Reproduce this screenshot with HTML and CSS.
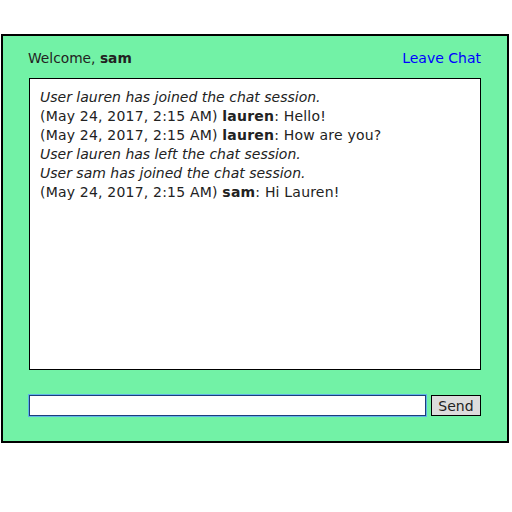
FILE: index.html
```html
<!DOCTYPE html>
<html>
<head>
<meta charset="utf-8">
<link rel="stylesheet" href="styles.css">
</head>
<body>
<div class="chat">
  <div class="header">
    <div class="welcome">Welcome, <b>sam</b></div>
    <a class="leave" href="#">Leave Chat</a>
  </div>
  <div class="log">
    <div class="sys">User lauren has joined the chat session.</div>
    <div>(May 24, 2017, 2:15 AM) <b>lauren</b>: Hello!</div>
    <div>(May 24, 2017, 2:15 AM) <b>lauren</b>: How are you?</div>
    <div class="sys">User lauren has left the chat session.</div>
    <div class="sys">User sam has joined the chat session.</div>
    <div>(May 24, 2017, 2:15 AM) <b>sam</b>: Hi Lauren!</div>
  </div>
  <div class="compose">
    <input class="msg" type="text">
    <button class="send">Send</button>
  </div>
</div>
</body>
</html>
```
FILE: styles.css
```css
html, body {
  margin: 0;
  padding: 0;
  background: #fff;
}
body {
  font-family: "DejaVu Sans", Verdana, sans-serif;
  font-size: 13px;
  color: #222;
}
.chat {
  margin: 34px 3px 0 1px;
  border: 2px solid #000;
  background: #72f2a6;
  padding: 12px 26px 25px 26px;
  height: 368px;
  display: flex;
  flex-direction: column;
}
.header {
  display: flex;
  justify-content: space-between;
  align-items: center;
  height: 20px;
  padding: 0 0 0 0;
  margin-left: -1px;
}
.leave {
  color: #0000ff;
  text-decoration: none;
  font-size: 14px;
}
.welcome {
  font-size: 13.8px;
}
.log {
  margin-top: 10px;
  height: 273px;
  border: 1px solid #000;
  background: #fff;
  padding: 9px 10px 8px;
  line-height: 19px;
  font-size: 14px;
  letter-spacing: 0.2px;
}
.sys {
  font-style: italic;
  letter-spacing: 0;
}
.compose {
  margin-top: 25px;
  display: flex;
  gap: 5px;
}
.msg {
  flex: 1;
  height: 21px;
  box-sizing: border-box;
  border: 1px solid #1d3f7a;
  outline: 1px solid #5fb3e8;
  margin: 0;
  padding: 0 3px;
  font-family: inherit;
  font-size: 13px;
}
.send {
  width: 50px;
  height: 21px;
  box-sizing: border-box;
  margin: 0;
  padding: 0;
  border: 1px solid #000;
  background: #dcdcdc;
  font-family: inherit;
  font-size: 14px;
  color: #222;
}
```
